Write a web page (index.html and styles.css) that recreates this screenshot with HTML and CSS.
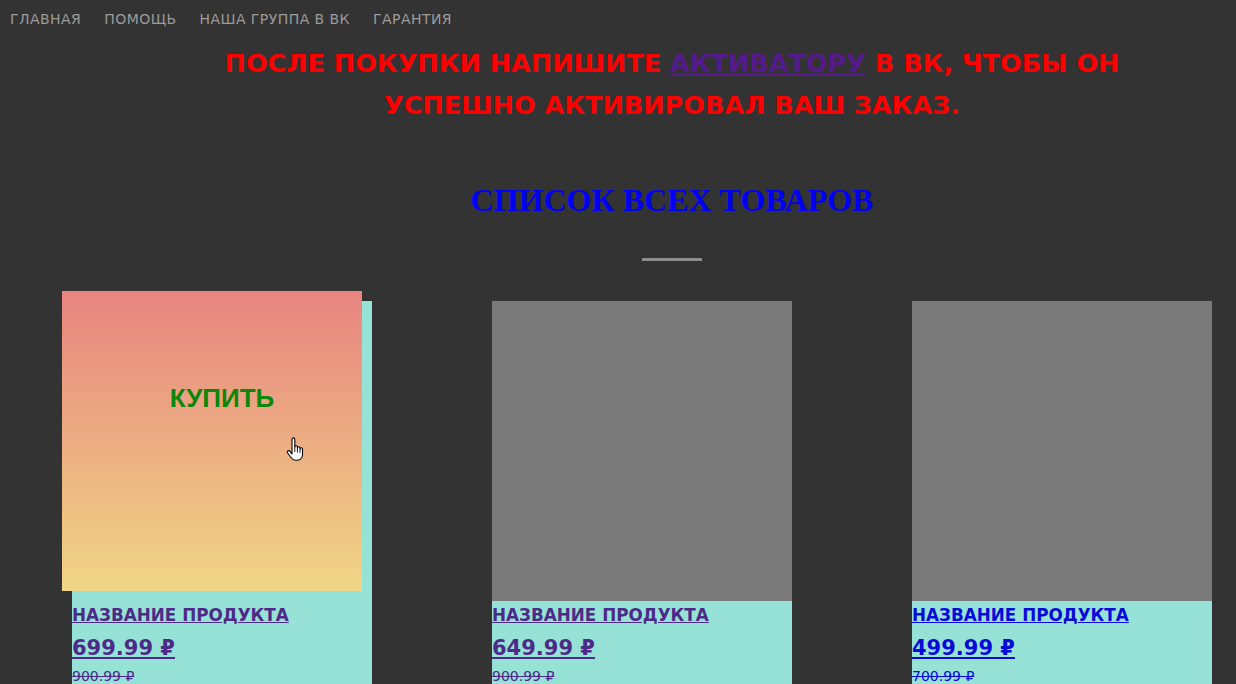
FILE: index.html
```html
<!DOCTYPE html>
<html lang="ru">
<head>
<meta charset="utf-8">
<link rel="stylesheet" href="styles.css">
</head>
<body>
<nav class="nav">
  <a class="nav-item">Главная</a>
  <a class="nav-item">Помощь</a>
  <a class="nav-item">Наша группа в ВК</a>
  <a class="nav-item">Гарантия</a>
</nav>
<div class="wrap">
  <p class="notice">После покупки напишите <a class="notice-link" href="#">активатору</a> в ВК, чтобы он<br>успешно активировал ваш заказ.</p>
  <h2 class="title">Список всех товаров</h2>
  <div class="divider"></div>
  <div class="grid">
    <div class="card">
      <div class="thumb thumb-hover">
        <span class="buy">Купить</span>
        <svg class="cursor" width="20" height="26" viewBox="0 0 20 26"><path d="M6 2.5c0-1 .6-1.6 1.4-1.6S8.8 1.5 8.8 2.5V10c0-.8.6-1.3 1.3-1.3s1.3.5 1.3 1.3v1c0-.8.6-1.3 1.3-1.3s1.3.5 1.3 1.3v1c0-.8.6-1.2 1.2-1.2s1.3.5 1.3 1.3v5.5c0 3.2-2.2 5.600-5.3 5.6H9.5c-1.8 0-3-.8-4-2.2L1.6 16c-.6-.8-.4-1.7.3-2.1.7-.4 1.5-.2 2 .5L6 17V2.5z" fill="#fff" stroke="#000" stroke-width="1.1" stroke-linejoin="round"/><path d="M8.8 10v5M11.4 11v4.5M14 12v4" stroke="#000" stroke-width="0.9"/></svg>
      </div>
      <div class="info">
        <a class="name visited" href="#">Название продукта</a>
        <a class="price visited" href="#">699.99 ₽</a>
        <a class="old visited" href="#">900.99 ₽</a>
      </div>
    </div>
    <div class="card">
      <div class="thumb"></div>
      <div class="info">
        <a class="name visited" href="#">Название продукта</a>
        <a class="price visited" href="#">649.99 ₽</a>
        <a class="old visited" href="#">900.99 ₽</a>
      </div>
    </div>
    <div class="card">
      <div class="thumb"></div>
      <div class="info">
        <a class="name fresh" href="#">Название продукта</a>
        <a class="price fresh" href="#">499.99 ₽</a>
        <a class="old fresh" href="#">700.99 ₽</a>
      </div>
    </div>
  </div>
</div>
</body>
</html>
```
FILE: styles.css
```css
html, body {
  margin: 0;
  padding: 0;
  background: #333333;
  overflow: hidden;
  height: 684px;
}
body {
  font-family: "DejaVu Sans", "Open Sans", sans-serif;
}
.nav {
  display: flex;
  gap: 23px;
  padding: 10px 10px 0 10px;
  height: 32px;
}
.nav-item {
  color: #9b9b9b;
  font-size: 14px;
  letter-spacing: 0.45px;
  text-transform: uppercase;
  line-height: 18px;
}
.wrap {
  width: 1344px;
}
.notice {
  margin: 0;
  text-align: center;
  color: #ff0000;
  font-weight: bold;
  font-size: 25.5px;
  line-height: 42px;
  text-transform: uppercase;
}
.notice-link {
  color: #551a8b;
}
.title {
  margin: 54px 0 0 0;
  text-align: center;
  color: #0000f5;
  font-family: "Liberation Serif", serif;
  font-weight: bold;
  font-size: 32px;
  line-height: 40px;
  text-transform: uppercase;
}
.divider {
  width: 60px;
  height: 3px;
  background: #8d8d8d;
  margin: 38px auto 0;
}
.grid {
  display: grid;
  grid-template-columns: repeat(3, 300px);
  column-gap: 120px;
  padding: 40px 0 0 72px;
}
.card {
  background: #96e2d6;
  height: 400px;
}
.thumb {
  height: 300px;
  background: #7a7a7a;
  position: relative;
}
.thumb-hover {
  background: linear-gradient(to bottom, #e88480, #f0d685);
  transform: translate(-10px, -10px);
  display: flex;
  justify-content: center;
  padding-top: 92px;
  box-sizing: border-box;
}
.buy {
  color: #0b870b;
  font-family: "Liberation Sans", sans-serif;
  font-weight: bold;
  font-size: 26px;
  text-transform: uppercase;
  margin-left: 20px;
  height: 30px;
}
.cursor {
  position: absolute;
  left: 224px;
  top: 146px;
}
.info {
  display: flex;
  flex-direction: column;
  align-items: flex-start;
  padding-top: 3px;
}
.name, .price, .old {
  text-decoration: underline;
  font-weight: bold;
}
.name {
  font-size: 16.8px;
  line-height: 22px;
  text-transform: uppercase;
}
.price {
  font-size: 21px;
  line-height: 28px;
  margin-top: 8px;
}
.old {
  font-weight: normal;
  text-decoration: line-through;
  font-size: 14px;
  line-height: 20px;
  margin-top: 4px;
}
.visited { color: #4e2a88; }
.fresh { color: #0a0ad8; }
```
